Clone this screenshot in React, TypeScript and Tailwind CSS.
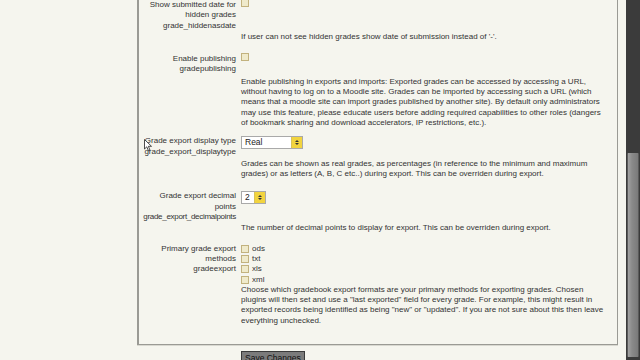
import type { ReactNode } from 'react';

const FONT = { fontFamily: '"Liberation Sans", Arial, sans-serif' };

function Check() {
  return <span className="inline-block h-[8px] w-[8px] shrink-0 border border-[#c2b27e] bg-[#efeacb]" />;
}

function Select({ value, width }: { value: string; width: string }) {
  return (
    <div className={`flex h-[13px] items-stretch border border-[#a9a9a9] bg-white ${width}`}>
      <span className="flex-1 pl-[3px] text-[8.5px] leading-[11px] text-[#222]">{value}</span>
      <span className="flex w-[11px] flex-col items-center justify-center gap-[1px] border-l border-[#d9c25a] bg-[#f2d43e]">
        <span className="h-0 w-0 border-x-[2px] border-b-[2px] border-x-transparent border-b-[#333]" />
        <span className="h-0 w-0 border-x-[2px] border-t-[2px] border-x-transparent border-t-[#333]" />
      </span>
    </div>
  );
}

interface RowProps {
  label: string[];
  control: ReactNode;
  desc: string[];
  top: string;
  descTop: string;
}

function Row({ label, control, desc, top, descTop }: RowProps) {
  return (
    <div className={top}>
      <div className="flex">
        <div className="w-[97px] shrink-0 text-right">
          {label.map(l => (
            <div key={l} className={l.length > 25 ? 'whitespace-nowrap tracking-[-0.3px]' : 'whitespace-nowrap'}>
              {l}
            </div>
          ))}
        </div>
        <div className="ml-[5px]">{control}</div>
      </div>
      <div className={`ml-[102px] ${descTop}`}>
        {desc.map(l => (
          <div key={l} className="whitespace-nowrap">{l}</div>
        ))}
      </div>
    </div>
  );
}

export default function App() {
  return (
    <div className="relative flex h-[360px] w-[640px] overflow-hidden bg-[#f5f5ee] text-[8px] leading-[10.3px] text-[#333]" style={FONT}>
      <div className="flex-1">
        <div className="ml-[137px] w-[481px] border-b border-l-2 border-r border-[#9a9a94] pb-[18px] shadow-[0_1px_0_#d8d8d0]">
          <Row
            top="mt-[0px]"
            descTop="mt-[1px]"
            label={['Show submitted date for', 'hidden grades', 'grade_hiddenasdate']}
            control={<div className="mt-[-1px]"><Check /></div>}
            desc={["If user can not see hidden grades show date of submission instead of '-'."]}
          />
          <Row
            top="mt-[12px]"
            descTop="mt-[2px]"
            label={['Enable publishing', 'gradepublishing']}
            control={<div className="mt-[-1px]"><Check /></div>}
            desc={[
              'Enable publishing in exports and imports: Exported grades can be accessed by accessing a URL,',
              'without having to log on to a Moodle site. Grades can be imported by accessing such a URL (which',
              'means that a moodle site can import grades published by another site). By default only administrators',
              'may use this feature, please educate users before adding required capabilities to other roles (dangers',
              'of bookmark sharing and download accelerators, IP restrictions, etc.).',
            ]}
          />
          <Row
            top="mt-[8px]"
            descTop="mt-[2px]"
            label={['Grade export display type', 'grade_export_displaytype']}
            control={<Select value="Real" width="w-[62px]" />}
            desc={[
              'Grades can be shown as real grades, as percentages (in reference to the minimum and maximum',
              'grades) or as letters (A, B, C etc..) during export. This can be overriden during export.',
            ]}
          />
          <Row
            top="mt-[12px]"
            descTop="mt-[1px]"
            label={['Grade export decimal', 'points', 'grade_export_decimalpoints']}
            control={<Select value="2" width="w-[25px]" />}
            desc={['The number of decimal points to display for export. This can be overriden during export.']}
          />
          <Row
            top="mt-[10px]"
            descTop="mt-[0px]"
            label={['Primary grade export', 'methods', 'gradeexport']}
            control={
              <div>
                {['ods', 'txt', 'xls', 'xml'].map(m => (
                  <div key={m} className="flex items-center gap-[3px]">
                    <Check />
                    <span>{m}</span>
                  </div>
                ))}
              </div>
            }
            desc={[
              'Choose which gradebook export formats are your primary methods for exporting grades. Chosen',
              'plugins will then set and use a "last exported" field for every grade. For example, this might result in',
              'exported records being identified as being "new" or "updated". If you are not sure about this then leave',
              'everything unchecked.',
            ]}
          />
        </div>
        <div className="ml-[241px] mt-[6px] inline-block h-[14px] border border-[#3a3a3a] bg-[#7b7b7b] px-[3px] text-[8.5px] leading-[12px] text-[#111]">
          Save Changes
        </div>
      </div>
      <div className="ml-[8px] flex w-[14px] flex-col bg-[#3b3b3b]">
        <div className="mx-[1px] mt-[153px] h-[204px] rounded-[1px] border-l border-r border-[#5a5a5a] bg-[linear-gradient(90deg,#a2a2a2,#8a8a8a_40%,#7a7a7a)]" />
      </div>
      <svg className="absolute left-[144px] top-[139px]" width="8" height="13" viewBox="0 0 8 13">
        <path d="M0.5 0.5 L0.5 10 L2.8 7.8 L4.5 11.8 L6 11.2 L4.4 7.3 L7.5 7.3 Z" fill="#fff" stroke="#222" strokeWidth="0.8" />
      </svg>
    </div>
  );
}
